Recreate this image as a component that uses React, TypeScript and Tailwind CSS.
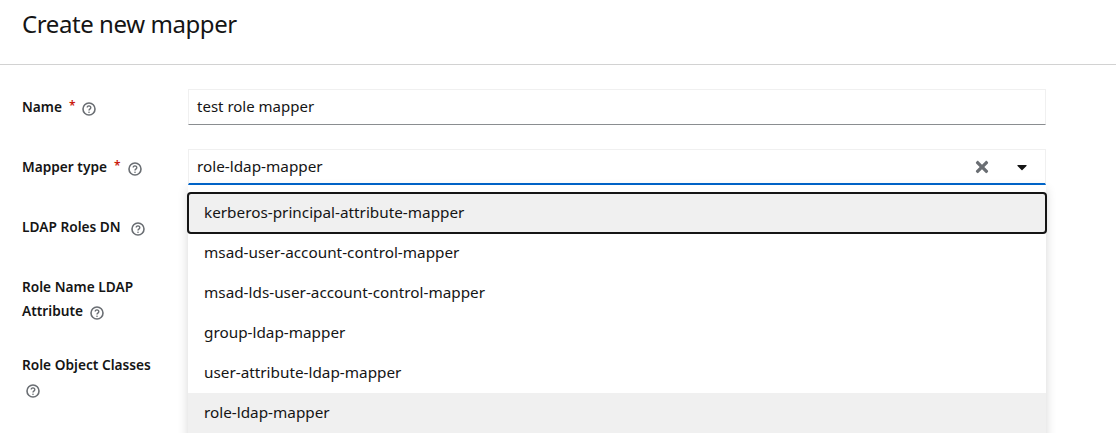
import { FaTimes, FaCaretDown } from "react-icons/fa";

const font = "font-['Noto_Sans','Open_Sans',sans-serif]";

function Help({ className = "" }: { className?: string }) {
  return (
    <svg viewBox="0 0 14 14" className={`w-[14px] h-[14px] shrink-0 ${className}`} fill="none" stroke="#6a6e73">
      <circle cx="7" cy="7" r="6" strokeWidth="1.6" />
      <path d="M5.2 5.5a1.8 1.7 0 1 1 2.9 1.4c-.7.5-1.1.8-1.1 1.6" strokeWidth="1.4" />
      <circle cx="7" cy="10.3" r="0.8" fill="#6a6e73" stroke="none" />
    </svg>
  );
}

function Star({ className = "" }: { className?: string }) {
  return <span className={`text-[#c9190b] text-[12px] leading-[24px] -mt-[2px] ${className}`}>*</span>;
}

const options = [
  "kerberos-principal-attribute-mapper",
  "msad-user-account-control-mapper",
  "msad-lds-user-account-control-mapper",
  "group-ldap-mapper",
  "user-attribute-ldap-mapper",
  "role-ldap-mapper",
];

const label = "flex items-center h-[36px] text-[13.7px] font-semibold";

export default function App() {
  return (
    <div className={`w-[1116px] h-[433px] overflow-hidden bg-white text-[#151515] ${font}`}>
      <header className="h-[65px] border-b border-[#d2d2d2] px-[22px] pt-[6px]">
        <h1 className="text-[24px] leading-[36px] font-normal tracking-[-0.42px]">Create new mapper</h1>
      </header>
      <main className="relative pl-[22px] pt-[24px] w-[1046px]">
        <div className="grid grid-cols-[166px_858px] gap-y-[24px]">
          <div className={label}>
            <span>Name</span><Star className="ml-[7px]" /><Help className="ml-[6px] mt-[4px]" />
          </div>
          <div className="h-[36px] border border-[#f0f0f0] border-b-[#8a8d90] flex items-center px-[8px] pb-[2px] text-[15px]">test role mapper</div>

          <div className={label}>
            <span>Mapper type</span><Star className="ml-[7px]" /><Help className="ml-[7px] mt-[4px]" />
          </div>
          <div className="relative h-[36px] border border-[#f0f0f0] border-b-2 border-b-[#06c] flex items-center justify-between pl-[8px] pr-[15px] text-[15.3px]">
            <span className="-mt-[1px]">role-ldap-mapper</span>
            <span className="flex items-center gap-[23px]">
              <FaTimes className="w-[18px] h-[18px] text-[#6a6e73]" />
              <FaCaretDown className="w-[16px] h-[16px] text-[#151515]" />
            </span>
            <ul className="absolute -left-[1px] -right-[1px] top-[35px] bg-white shadow-[0_4px_10px_rgba(3,3,3,0.16)] pt-[8px] pb-[8px]">
              {options.map((o, i) => (
                <li
                  key={o}
                  className={`h-[40px] flex items-center pl-[16px] pb-[2px] text-[15.3px] text-[#151515] ${
                    i === 0
                      ? "relative bg-[#f0f0f0] rounded-[3px] outline-2 outline-[#151515] -outline-offset-1"
                      : i === 5
                      ? "bg-[#f0f0f0]"
                      : ""
                  }`}
                >
                  {o}
                </li>
              ))}
            </ul>
          </div>

          <div className={label}>
            <span>LDAP Roles DN</span><Help className="ml-[10px] mt-[4px]" />
          </div>
          <div />

          <div className="text-[13.7px] leading-[24px] font-semibold mt-[6px]">
            Role Name LDAP
            <div className="flex items-center">
              <span>Attribute</span><Help className="ml-[7px] mt-[4px]" />
            </div>
          </div>
          <div />

          <div className="text-[13.7px] leading-[24px] font-semibold mt-[6px] pr-[8px]">
            Role Object Classes
            <div className="flex items-center h-[24px]"><Help className="ml-[4px] mt-[4px]" /></div>
          </div>
          <div />
        </div>
      </main>
    </div>
  );
}
